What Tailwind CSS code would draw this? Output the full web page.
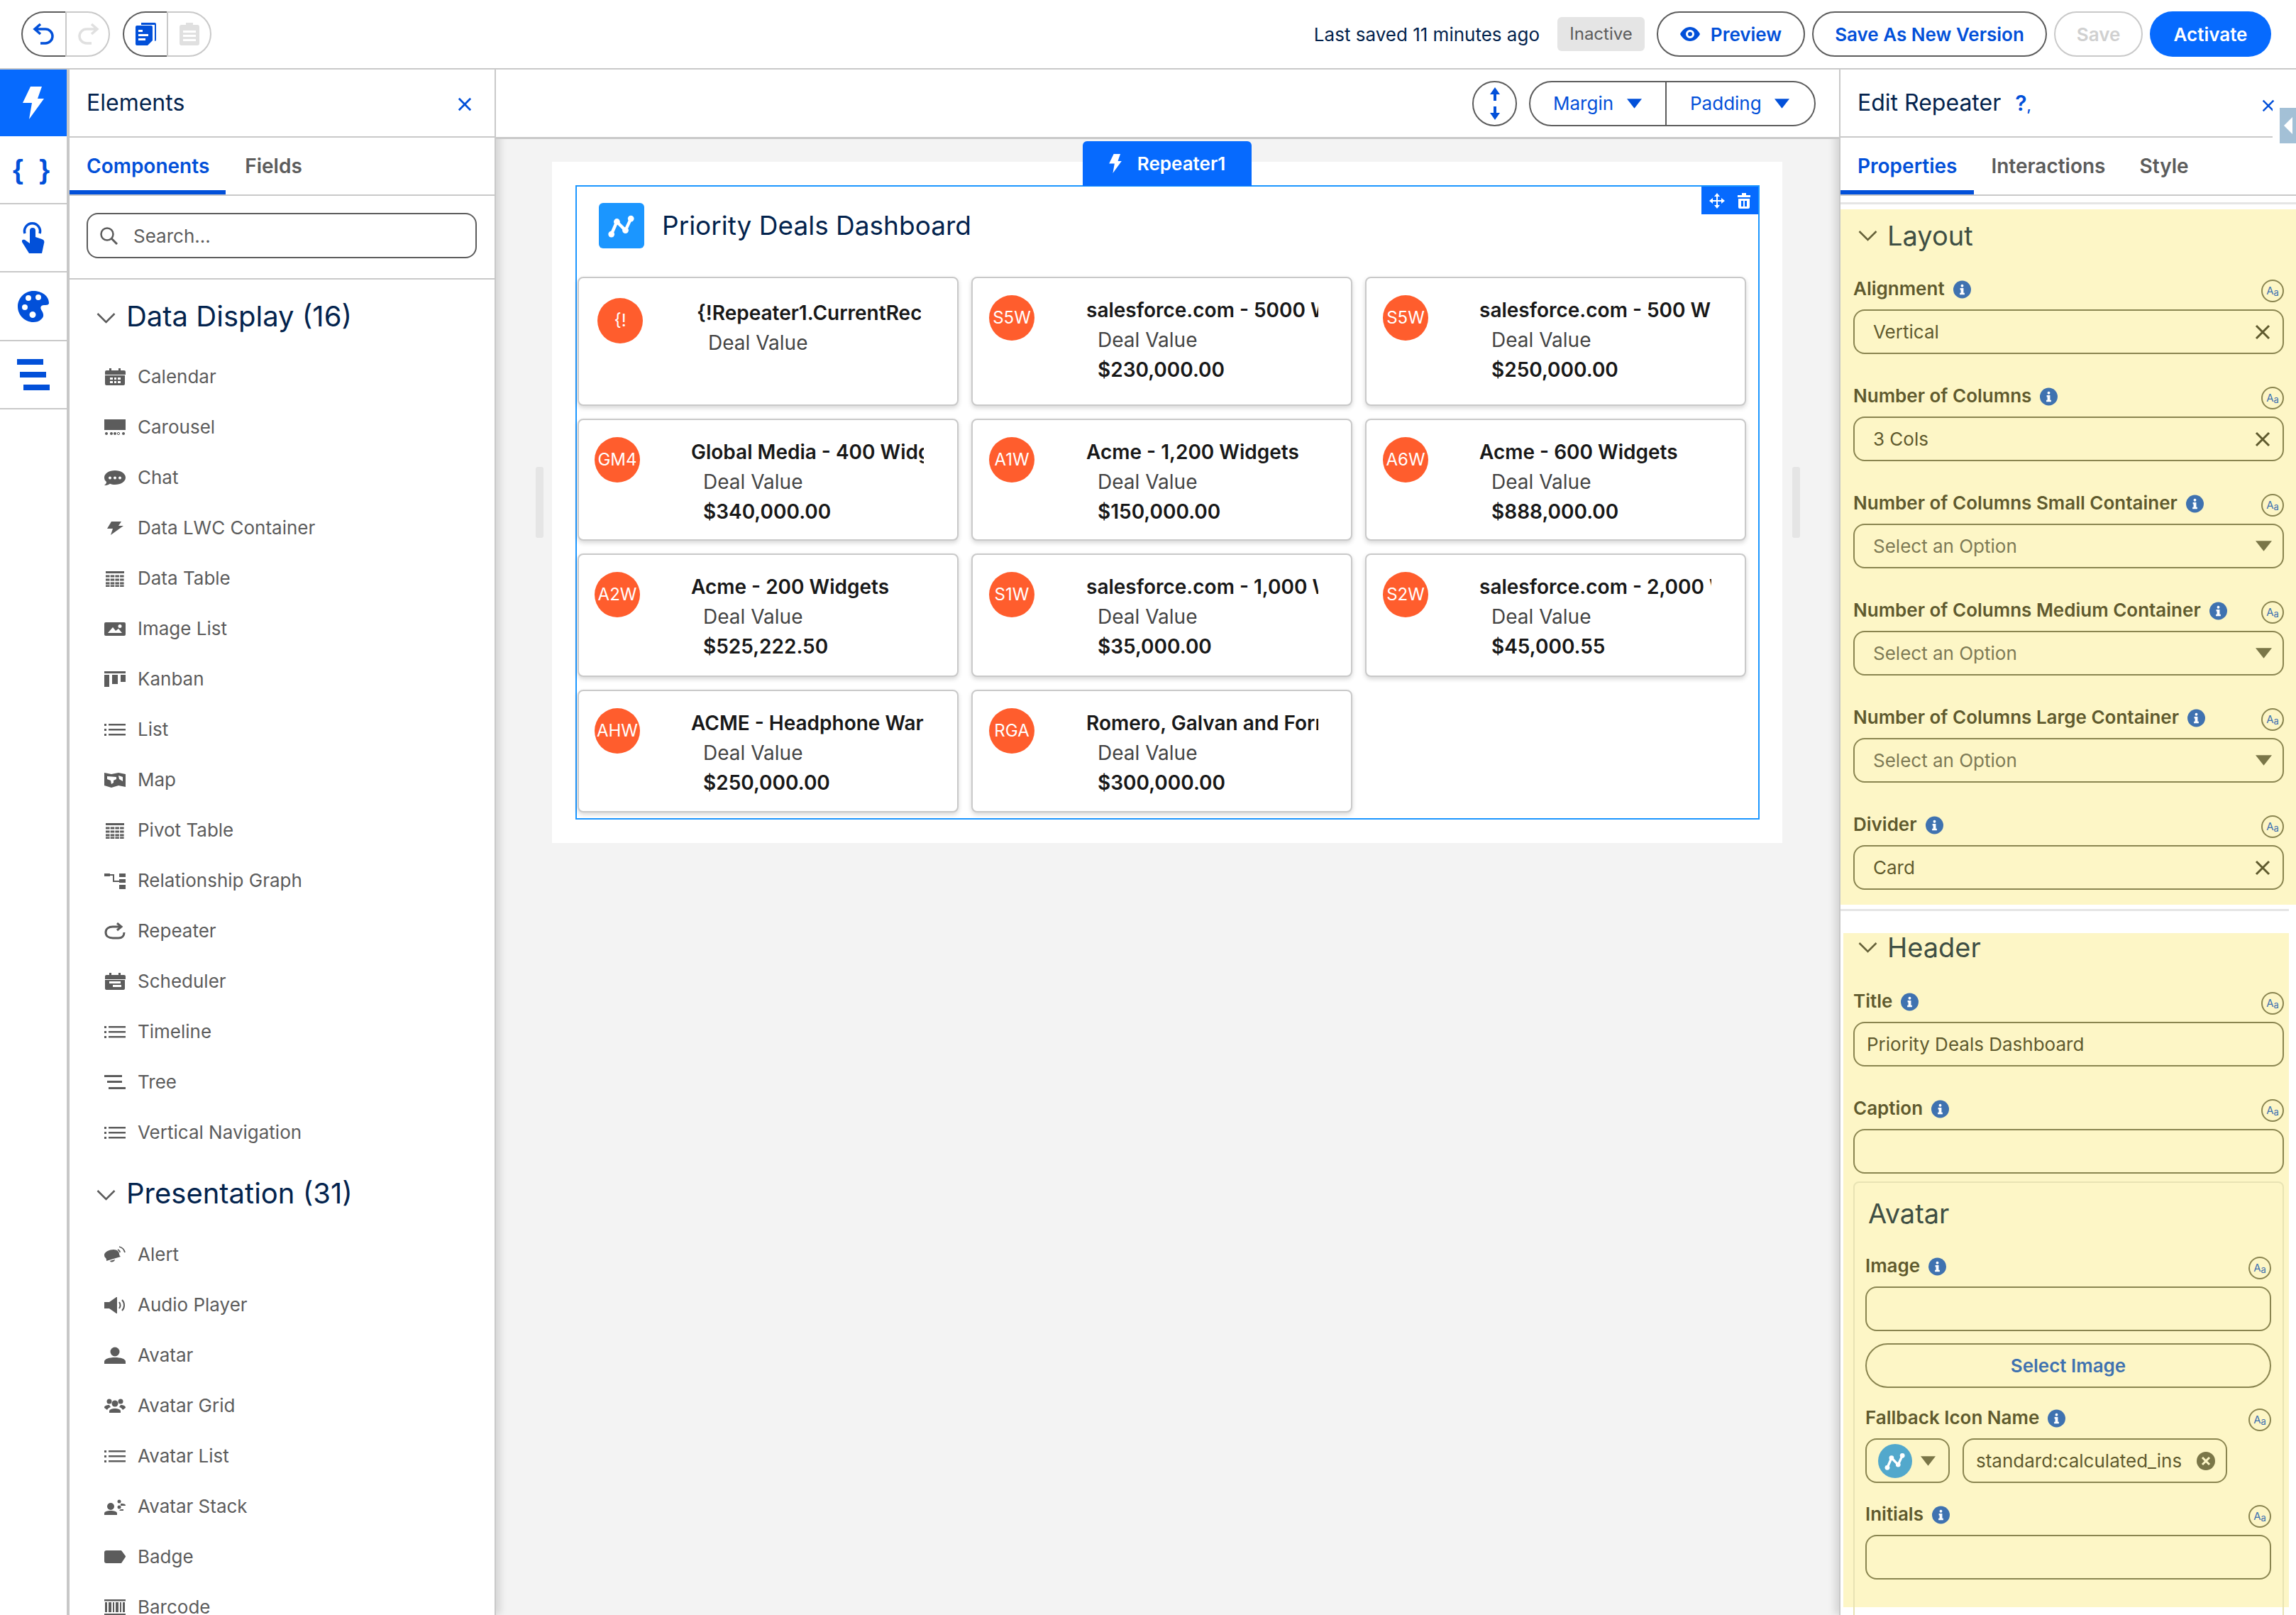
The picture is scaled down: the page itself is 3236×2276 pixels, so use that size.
<!DOCTYPE html>
<html lang="en">
<head>
    <meta charset="UTF-8">
    <title>Lightning App Builder - Priority Deals Dashboard</title>
    <script src="https://cdn.jsdelivr.net/npm/@tailwindcss/browser@4"></script>
</head>
<body class="bg-white font-[Inter,sans-serif] text-[26px] text-[#5c5c5c]">

<!-- Icon sprites -->
<svg class="absolute w-0 h-0" xmlns="http://www.w3.org/2000/svg">
    <defs>
        <symbol id="i-bolt" viewBox="0 0 30 46"><path fill="currentColor" d="M11 0h16l-6 17h9L9 46l4-23H0z"/></symbol>
        <symbol id="i-calendar" viewBox="0 0 30 24"><path fill="currentColor" d="M7 0h3v3h10V0h3v3h5a2 2 0 0 1 2 2v4H1V5a2 2 0 0 1 2-2h4z"/><path fill="currentColor" fill-rule="evenodd" d="M1 10h28v12a2 2 0 0 1-2 2H3a2 2 0 0 1-2-2zM8 13v3h4v-3zM14 13v3h3v-3zM19 13v3h4v-3zM8 18v3h4v-3zM14 18v3h3v-3zM19 18v3h4v-3z"/></symbol>
        <symbol id="i-carousel" viewBox="0 0 30 24"><rect fill="currentColor" y="1" width="30" height="15"/><circle fill="currentColor" cx="3" cy="21" r="2"/><circle fill="currentColor" cx="10" cy="21" r="2"/><circle fill="currentColor" cx="15" cy="21" r="2"/><circle fill="none" stroke="currentColor" cx="20" cy="21" r="1.6"/><circle fill="currentColor" cx="27" cy="21" r="2"/></symbol>
        <symbol id="i-chat" viewBox="0 0 30 24"><path fill="currentColor" fill-rule="evenodd" d="M15 2c8 0 15 4 15 10s-7 10-15 10c-3 0-5-.4-7-1.200C5 23 2 23 0 23c2-1.500 3-3 3-5-2-1.500-3-3.500-3-6C0 6 7 2 15 2zM8 10.500a2 2 0 1 0 0 4 2 2 0 0 0 0-4zM15 10.500a2 2 0 1 0 0 4 2 2 0 0 0 0-4zM22 10.500a2 2 0 1 0 0 4 2 2 0 0 0 0-4z"/></symbol>
        <symbol id="i-smallbolt" viewBox="0 0 30 24"><path fill="currentColor" d="M10 3h14l-4 6h7L9 22l3-9H4z"/></symbol>
        <symbol id="i-table" viewBox="0 0 30 24"><path fill="currentColor" d="M2 2h26v3H2z"/><path stroke="currentColor" stroke-width="3" stroke-dasharray="5.500 1.200" d="M2 9h26M2 14h26M2 19h26M2 23h26"/></symbol>
        <symbol id="i-image" viewBox="0 0 30 24"><path fill="currentColor" fill-rule="evenodd" d="M2 3h26a2 2 0 0 1 2 2v15a2 2 0 0 1-2 2H2a2 2 0 0 1-2-2V5a2 2 0 0 1 2-2zM5 18h20l-5-6-4 3-4-5zM22 6a2.500 2.500 0 1 0 0 5 2.500 2.500 0 0 0 0-5z"/></symbol>
        <symbol id="i-kanban" viewBox="0 0 30 24"><path fill="currentColor" d="M0 1h30v3H0zM0 6h7v17H0zM11 6h8v13h-8zM23 6h7v10h-7z"/></symbol>
        <symbol id="i-list" viewBox="0 0 30 24"><path fill="currentColor" d="M0 4h3v3H0zM0 11h3v3H0zM0 18h3v3H0zM6 4h24v2.500H6zM6 11h24v2.500H6zM6 18h24v2.500H6z"/></symbol>
        <symbol id="i-map" viewBox="0 0 30 24"><path fill="currentColor" fill-rule="evenodd" d="M0 2l10 2 10-2 10 2v18l-10-2-10 3-10-3zM4 7v4l5 2 1 5 3-2v-3l4-2 0-3zM20 6l1 5 5 3V8z"/></symbol>
        <symbol id="i-graph" viewBox="0 0 30 24"><path fill="currentColor" d="M0 2h8v4H0zM21 2h9v5h-9zM21 10h9v5h-9zM21 18h9v6h-9zM8 3h6v9h7v2h-9V5H8z"/></symbol>
        <symbol id="i-repeat" viewBox="0 0 30 24"><path fill="none" stroke="currentColor" stroke-width="3" d="M23 6H12C6 6 2 9 2 14s4 8 10 8h8c5 0 8-3 8-8"/><path fill="none" stroke="currentColor" stroke-width="3" d="M18 1l6 5-6 5"/></symbol>
        <symbol id="i-sched" viewBox="0 0 30 24"><path fill="currentColor" d="M7 0h3v3h10V0h3v3h5a2 2 0 0 1 2 2v4H1V5a2 2 0 0 1 2-2h4z"/><path fill="currentColor" fill-rule="evenodd" d="M1 10h28v12a2 2 0 0 1-2 2H3a2 2 0 0 1-2-2zM7 12v3h16v-3zM12 17v3h12v-3z"/></symbol>
        <symbol id="i-tree" viewBox="0 0 30 24"><path fill="currentColor" d="M0 2h25v3H0zM4 10h21v3H4zM6 19h24v3H6z"/></symbol>
        <symbol id="i-alert" viewBox="0 0 30 24"><path fill="currentColor" d="M13 5c5 0 8 3 8 6 0 2 1 3 2 4L3 21c0-2 0-3-1-4-2-2-2-3-2-5 1-4 7-7 13-7zM8 21l7-2c0 3-6 5-7 2z"/><path fill="none" stroke="currentColor" stroke-width="1.800" d="M19 5c2 1 3 3 3 4M21 1c4 1 7 4 8 8"/></symbol>
        <symbol id="i-audio" viewBox="0 0 30 24"><path fill="currentColor" d="M0 8h7l10-7h1v23h-1L7 17H0z"/><path fill="none" stroke="currentColor" stroke-width="2" d="M21 8c2 3 2 6 0 9M25 5c4 4 4 11 0 15"/></symbol>
        <symbol id="i-avatar" viewBox="0 0 30 24"><circle fill="currentColor" cx="15" cy="7" r="6.500"/><path fill="currentColor" d="M0 24v-3c0-4 7-6 15-6s15 2 15 6v3z"/></symbol>
        <symbol id="i-agrid" viewBox="0 0 30 24"><circle fill="currentColor" cx="15" cy="9" r="4.500"/><path fill="currentColor" d="M7 22v-2c0-3 4-4 8-4s8 1 8 4v2z"/><circle fill="currentColor" cx="7" cy="6" r="3.500"/><circle fill="currentColor" cx="23" cy="6" r="3.500"/><path fill="currentColor" d="M0 15c0-3 3-4 7-4l2 3c-3 1-4 2-5 4zM30 15c0-3-3-4-7-4l-2 3c3 1 4 2 5 4z"/></symbol>
        <symbol id="i-astack" viewBox="0 0 30 24"><circle fill="currentColor" cx="9" cy="12" r="5"/><path fill="currentColor" d="M0 24v-2c0-3 4-4 9-4s9 1 9 4v2z"/><circle fill="currentColor" cx="21" cy="5" r="2.500"/><circle fill="currentColor" cx="21" cy="13" r="2.500"/><path fill="currentColor" d="M23 8c4 0 7 0 7 3h-7zM23 16h4v2h-6z"/></symbol>
        <symbol id="i-badge" viewBox="0 0 30 24"><path fill="currentColor" d="M3 3h21l6 8v1l-6 9H3a3 3 0 0 1-3-3V6a3 3 0 0 1 3-3z"/></symbol>
        <symbol id="i-barcode" viewBox="0 0 30 24"><path fill="currentColor" d="M0 1h30v2.500H0zM0 21h30v2.500H0zM1 5h3v14H1zM6 5h4v14H6zM12 5h2v14h-2zM16 5h4v14h-4zM22 5h2v14h-2zM26 5h3v14h-3z"/></symbol>
        <symbol id="i-chevron" viewBox="0 0 27 16"><path fill="none" stroke="currentColor" stroke-width="2.500" d="M1.500 2l12 12 12-12"/></symbol>
        <symbol id="i-x" viewBox="0 0 22 22"><path fill="none" stroke="currentColor" stroke-width="3" d="M2 2l18 18M20 2L2 20"/></symbol>
        <symbol id="i-caret" viewBox="0 0 22 16"><path fill="currentColor" d="M0 1h22L11 15z"/></symbol>
        <symbol id="i-insight" viewBox="0 0 40 40"><path fill="none" stroke="currentColor" stroke-width="4" stroke-linejoin="round" d="M7 31l7-16 11 11 7-15"/><circle fill="currentColor" cx="7" cy="31" r="4"/><circle fill="currentColor" cx="14" cy="15" r="4"/><circle fill="currentColor" cx="25" cy="26" r="4"/><circle fill="currentColor" cx="32" cy="11" r="4"/></symbol>
        <symbol id="i-info" viewBox="0 0 26 26"><circle fill="#3f72b0" cx="13" cy="13" r="13"/><circle fill="#fff" cx="13" cy="7.500" r="2"/><path fill="#fff" d="M10 11h5v7h1.500v2.500h-7V18H11v-4.500h-1z"/></symbol>
    </defs>
</svg>

<div class="flex flex-col w-[3236px] h-[2276px] overflow-hidden">

    <!-- Top bar -->
    <header class="relative z-30 flex items-center justify-between h-[98px] shrink-0 pl-[30px] pr-[35px] bg-white border-b-2 border-[#c9c9c9]">
        <div class="flex items-center gap-[18px]">
            <div class="flex h-[64px]">
                <div class="flex items-center justify-center w-[62px] rounded-l-full border-2 border-r-0 border-[#5c5c5c] text-[#0250d9]">
                    <svg class="w-[32px] h-[32px]" viewBox="0 0 32 32"><path fill="none" stroke="currentColor" stroke-width="3.500" d="M11 2L3 9l8 7M3 9h15a9.500 9.500 0 0 1 0 20h-7"/></svg>
                </div>
                <div class="flex items-center justify-center w-[63px] rounded-r-full border-2 border-[#c9c9c9] text-[#e0e0e0]">
                    <svg class="w-[32px] h-[32px]" viewBox="0 0 32 32"><path fill="none" stroke="currentColor" stroke-width="3.500" d="M21 2l8 7-8 7M29 9H14a9.500 9.500 0 0 0 0 20h7"/></svg>
                </div>
            </div>
            <div class="flex h-[64px]">
                <div class="flex items-center justify-center w-[62px] rounded-l-full border-2 border-r-0 border-[#5c5c5c] text-[#0250d9]">
                    <svg class="w-[30px] h-[32px]" viewBox="0 0 30 32"><path fill="currentColor" d="M9 0h19a2 2 0 0 1 2 2v22a2 2 0 0 1-2 2V3H9z"/><path fill="currentColor" fill-rule="evenodd" d="M3 4h20a2 2 0 0 1 2 2v19l-7 7H3a2 2 0 0 1-2-2V6a2 2 0 0 1 2-2zM5 10v3h6v-3zM5 16v3h14v-3zM5 22v3h10v-3z"/></svg>
                </div>
                <div class="flex items-center justify-center w-[63px] rounded-r-full border-2 border-[#c9c9c9] text-[#e0e0e0]">
                    <svg class="w-[28px] h-[32px]" viewBox="0 0 28 32"><path fill="currentColor" fill-rule="evenodd" d="M9 0h10v3h6a3 3 0 0 1 3 3v23a3 3 0 0 1-3 3H3a3 3 0 0 1-3-3V6a3 3 0 0 1 3-3h6zM5 11v3h18v-3zM5 17v3h18v-3zM5 23v3h18v-3z"/></svg>
                </div>
            </div>
        </div>
        <div class="flex items-center gap-[10px]">
            <span class="mr-[15px] text-[#03234d]">Last saved 11 minutes ago</span>
            <span class="flex items-center justify-center w-[123px] h-[48px] mr-[7px] rounded-[6px] bg-[#e5e5e5] text-[24px]">Inactive</span>
            <button class="flex items-center justify-center gap-[15px] w-[209px] h-[64px] rounded-full border-2 border-[#5c5c5c] font-semibold text-[#0250d9]">
                <svg class="w-[28px] h-[20px]" viewBox="0 0 28 20"><path fill="currentColor" fill-rule="evenodd" d="M14 0c6 0 11 4 14 10-3 6-8 10-14 10S3 16 0 10C3 4 8 0 14 0zm0 4a6 6 0 1 0 0 12 6 6 0 0 0 0-12zm0 3a3 3 0 1 1 0 6 3 3 0 0 1 0-6z"/></svg>
                Preview
            </button>
            <button class="w-[331px] h-[64px] rounded-full border-2 border-[#5c5c5c] font-semibold text-[#0250d9]">Save As New Version</button>
            <button class="w-[125px] h-[64px] rounded-full border-2 border-[#c9c9c9] font-semibold text-[#d0d0d0]">Save</button>
            <button class="w-[171px] h-[64px] rounded-full bg-[#066afe] font-semibold text-white">Activate</button>
        </div>
    </header>

    <div class="flex flex-1 min-h-0">

        <!-- Icon rail -->
        <nav class="flex flex-col w-[98px] shrink-0 border-r-4 border-[#c9c9c9] bg-white text-[#0250d9]">
            <div class="flex items-center justify-center h-[94px] bg-[#066afe] text-white">
                <svg class="w-[32px] h-[46px]"><use href="#i-bolt"/></svg>
            </div>
            <div class="flex items-center justify-center h-[96px] border-b-2 border-[#c9c9c9] font-[Liberation_Sans,sans-serif] font-bold text-[38px] tracking-[6px]">{ }</div>
            <div class="flex items-center justify-center h-[96px] border-b-2 border-[#c9c9c9]">
                <svg class="w-[32px] h-[46px]" viewBox="0 0 32 46"><path fill="none" stroke="currentColor" stroke-width="3.500" d="M4 17a11 11 0 1 1 21 0"/><path fill="currentColor" d="M11 13a4 4 0 0 1 8 0v9l9 3c3 1 4 3 3 6l-3 14H10L0 29c-1-3 2-4 4-3l7 5z"/></svg>
            </div>
            <div class="flex items-center justify-center h-[97px] border-b-2 border-[#c9c9c9]">
                <svg class="w-[44px] h-[44px]" viewBox="0 0 44 44"><path fill="currentColor" fill-rule="evenodd" d="M22 0c12 0 22 7 22 17 0 3-4 3-7 3-5 0-6 4-3 8 3 5 3 9-1 12-3 3-7 4-11 4C10 44 0 34 0 22S10 0 22 0zM15 6a4 4 0 1 0 0 8 4 4 0 0 0 0-8zM29 5a4 4 0 1 0 0 8 4 4 0 0 0 0-8zM10 19a4 4 0 1 0 0 8 4 4 0 0 0 0-8zM21 29a4.500 4.500 0 1 0 0 9 4.500 4.500 0 0 0 0-9z"/></svg>
            </div>
            <div class="flex items-center justify-center h-[96px] border-b-2 border-[#c9c9c9]">
                <svg class="w-[46px] h-[46px]" viewBox="0 0 46 46"><path fill="currentColor" d="M0 1h37v8H0zM4 19h37v8H4zM9 37h37v8H9z"/></svg>
            </div>
        </nav>

        <!-- Elements panel -->
        <aside class="relative z-10 flex flex-col w-[601px] shrink-0 overflow-hidden bg-white border-r-2 border-[#c9c9c9] shadow-[6px_0_10px_rgba(0,0,0,0.12)]">
            <div class="flex items-center justify-between h-[96px] shrink-0 pl-[24px] pr-[32px] border-b-2 border-[#c9c9c9]">
                <span class="text-[32px] text-[#03234d]">Elements</span>
                <svg class="w-[20px] h-[20px] mt-[4px] text-[#0250d9]"><use href="#i-x"/></svg>
            </div>
            <div class="relative flex items-center gap-[50px] h-[82px] shrink-0 pl-[24px] border-b-2 border-[#c9c9c9] text-[28px] font-semibold">
                <span class="text-[#0250d9]">Components</span>
                <span>Fields</span>
                <span class="absolute left-0 bottom-0 w-[220px] h-[6px] bg-[#0250d9]"></span>
            </div>
            <div class="h-[118px] shrink-0 pt-[24px] px-[24px] border-b-2 border-[#c9c9c9]">
                <div class="flex items-center gap-[22px] w-[550px] h-[64px] pl-[16px] rounded-[16px] border-2 border-[#5c5c5c]">
                    <svg class="w-[26px] h-[26px]" viewBox="0 0 26 26"><circle cx="11" cy="11" r="8.500" fill="none" stroke="currentColor" stroke-width="2.500"/><path stroke="currentColor" stroke-width="3" d="M17 17l8 8"/></svg>
                    <span>Search...</span>
                </div>
            </div>
            <div class="flex items-center gap-[15px] h-[101px] shrink-0 pl-[38px] pt-[3px]">
                <svg class="w-[27px] h-[16px] mt-[4px]"><use href="#i-chevron"/></svg>
                <span class="text-[40px] text-[#03234d]">Data Display (16)</span>
            </div>
            <ul class="shrink-0">
                <li class="flex items-center gap-[17px] h-[71px] pl-[49px]"><svg class="w-[30px] h-[24px]"><use href="#i-calendar"/></svg>Calendar</li>
                <li class="flex items-center gap-[17px] h-[71px] pl-[49px]"><svg class="w-[30px] h-[24px]"><use href="#i-carousel"/></svg>Carousel</li>
                <li class="flex items-center gap-[17px] h-[71px] pl-[49px]"><svg class="w-[30px] h-[24px]"><use href="#i-chat"/></svg>Chat</li>
                <li class="flex items-center gap-[17px] h-[71px] pl-[49px]"><svg class="w-[30px] h-[24px]"><use href="#i-smallbolt"/></svg>Data LWC Container</li>
                <li class="flex items-center gap-[17px] h-[71px] pl-[49px]"><svg class="w-[30px] h-[24px]"><use href="#i-table"/></svg>Data Table</li>
                <li class="flex items-center gap-[17px] h-[71px] pl-[49px]"><svg class="w-[30px] h-[24px]"><use href="#i-image"/></svg>Image List</li>
                <li class="flex items-center gap-[17px] h-[71px] pl-[49px]"><svg class="w-[30px] h-[24px]"><use href="#i-kanban"/></svg>Kanban</li>
                <li class="flex items-center gap-[17px] h-[71px] pl-[49px]"><svg class="w-[30px] h-[24px]"><use href="#i-list"/></svg>List</li>
                <li class="flex items-center gap-[17px] h-[71px] pl-[49px]"><svg class="w-[30px] h-[24px]"><use href="#i-map"/></svg>Map</li>
                <li class="flex items-center gap-[17px] h-[71px] pl-[49px]"><svg class="w-[30px] h-[24px]"><use href="#i-table"/></svg>Pivot Table</li>
                <li class="flex items-center gap-[17px] h-[71px] pl-[49px]"><svg class="w-[30px] h-[24px]"><use href="#i-graph"/></svg>Relationship Graph</li>
                <li class="flex items-center gap-[17px] h-[71px] pl-[49px]"><svg class="w-[30px] h-[24px]"><use href="#i-repeat"/></svg>Repeater</li>
                <li class="flex items-center gap-[17px] h-[71px] pl-[49px]"><svg class="w-[30px] h-[24px]"><use href="#i-sched"/></svg>Scheduler</li>
                <li class="flex items-center gap-[17px] h-[71px] pl-[49px]"><svg class="w-[30px] h-[24px]"><use href="#i-list"/></svg>Timeline</li>
                <li class="flex items-center gap-[17px] h-[71px] pl-[49px]"><svg class="w-[30px] h-[24px]"><use href="#i-tree"/></svg>Tree</li>
                <li class="flex items-center gap-[17px] h-[71px] pl-[49px]"><svg class="w-[30px] h-[24px]"><use href="#i-list"/></svg>Vertical Navigation</li>
            </ul>
            <div class="flex items-center gap-[15px] h-[101px] shrink-0 pl-[38px]">
                <svg class="w-[27px] h-[16px] mt-[4px]"><use href="#i-chevron"/></svg>
                <span class="text-[40px] text-[#03234d]">Presentation (31)</span>
            </div>
            <ul class="shrink-0">
                <li class="flex items-center gap-[17px] h-[71px] pl-[49px]"><svg class="w-[30px] h-[24px]"><use href="#i-alert"/></svg>Alert</li>
                <li class="flex items-center gap-[17px] h-[71px] pl-[49px]"><svg class="w-[30px] h-[24px]"><use href="#i-audio"/></svg>Audio Player</li>
                <li class="flex items-center gap-[17px] h-[71px] pl-[49px]"><svg class="w-[30px] h-[24px]"><use href="#i-avatar"/></svg>Avatar</li>
                <li class="flex items-center gap-[17px] h-[71px] pl-[49px]"><svg class="w-[30px] h-[24px]"><use href="#i-agrid"/></svg>Avatar Grid</li>
                <li class="flex items-center gap-[17px] h-[71px] pl-[49px]"><svg class="w-[30px] h-[24px]"><use href="#i-list"/></svg>Avatar List</li>
                <li class="flex items-center gap-[17px] h-[71px] pl-[49px]"><svg class="w-[30px] h-[24px]"><use href="#i-astack"/></svg>Avatar Stack</li>
                <li class="flex items-center gap-[17px] h-[71px] pl-[49px]"><svg class="w-[30px] h-[24px]"><use href="#i-badge"/></svg>Badge</li>
                <li class="flex items-center gap-[17px] h-[71px] pl-[49px]"><svg class="w-[30px] h-[24px]"><use href="#i-barcode"/></svg>Barcode</li>
            </ul>
        </aside>

        <!-- Canvas -->
        <main class="flex flex-col flex-1 min-w-0 bg-[#f3f3f3]">
            <div class="relative z-20 flex items-center justify-end h-[98px] shrink-0 pr-[33px] bg-white border-b-3 border-[#c9c9c9]">
                <div class="flex items-center justify-center w-[63px] h-[64px] mr-[17px] rounded-full border-2 border-[#5c5c5c] text-[#0250d9]">
                    <svg class="w-[18px] h-[46px]" viewBox="0 0 18 46"><path fill="currentColor" d="M9 0l7 10h-5v9H7v-9H2zM9 46l7-10h-5v-9H7v9H2z"/></svg>
                </div>
                <div class="flex h-[64px] rounded-full border-2 border-[#5c5c5c] text-[#0250d9]">
                    <div class="flex items-center gap-[19px] w-[192px] pl-[32px] border-r-2 border-[#5c5c5c]">Margin<svg class="w-[21px] h-[16px]"><use href="#i-caret"/></svg></div>
                    <div class="flex items-center gap-[18px] w-[208px] pl-[33px]">Padding<svg class="w-[21px] h-[16px]"><use href="#i-caret"/></svg></div>
                </div>
            </div>
            <div class="relative flex-1 min-h-0">
                <div class="absolute left-[56px] top-[462px] w-[11px] h-[100px] rounded-[3px] bg-[#e5e5e5]"></div>
                <div class="absolute left-[1827px] top-[462px] w-[11px] h-[100px] rounded-[3px] bg-[#e5e5e5]"></div>
                <div class="w-[1734px] h-[960px] mt-[32px] ml-[79px] pt-[33px] pl-[33px] bg-white">
                    <!-- Repeater frame -->
                    <div class="relative w-[1669px] h-[894px] border-2 border-[#1b96ff]">
                        <div class="absolute left-[713px] -top-[64px] flex items-center justify-center gap-[22px] w-[238px] h-[63px] rounded-t-[6px] bg-[#066afe] font-semibold text-white">
                            <svg class="w-[18px] h-[27px]"><use href="#i-bolt"/></svg>Repeater1
                        </div>
                        <div class="absolute right-0 top-0 flex items-center justify-center gap-[18px] w-[80px] h-[39px] bg-[#066afe] text-white">
                            <svg class="w-[22px] h-[22px]" viewBox="0 0 22 22"><path fill="currentColor" d="M11 0l4 5h-3v5h5V7l5 4-5 4v-3h-5v5h3l-4 5-4-5h3v-5H5v3l-5-4 5-4v3h5V5H7z"/></svg>
                            <svg class="w-[18px] h-[22px]" viewBox="0 0 18 22"><path fill="currentColor" fill-rule="evenodd" d="M6 0h6v3h6v3H0V3h6zM1 8h16v12a2 2 0 0 1-2 2H3a2 2 0 0 1-2-2zM5 11v8h3v-8zM10 11v8h3v-8z"/></svg>
                        </div>
                        <div class="flex items-start gap-[25px] h-[127px] pt-[23px] pl-[31px]">
                            <div class="flex items-center justify-center w-[64px] h-[64px] rounded-[6px] bg-[#1b96ff] text-white">
                                <svg class="w-[44px] h-[44px]"><use href="#i-insight"/></svg>
                            </div>
                            <h1 class="h-[64px] leading-[64px] text-[37px] text-[#03234d]">Priority Deals Dashboard</h1>
                        </div>
                        <div class="grid grid-cols-[537px_537px_537px] grid-rows-[182px_172px_174px_173px] gap-[18px] pl-[1px]">

                            <div class="flex items-start pt-[28px] pl-[26px] rounded-[8px] border-2 border-[#c9c9c9] bg-white shadow-[0_3px_6px_rgba(0,0,0,0.16)]">
                                <div class="flex items-center justify-center w-[64px] h-[64px] shrink-0 rounded-full bg-[#ff5d2d] text-[24px] text-white">{!</div>
                                <div class="w-[316px] ml-[76px] text-[28px] leading-[42px] overflow-hidden whitespace-nowrap">
                                    <div class="font-semibold text-[#181818]">{!Repeater1.CurrentRecord.Name}</div>
                                    <div class="pl-[16px] text-[#444444]">Deal Value</div>
                                </div>
                            </div>
                            <div class="flex items-start pt-[24px] pl-[23px] rounded-[8px] border-2 border-[#c9c9c9] bg-white shadow-[0_3px_6px_rgba(0,0,0,0.16)]">
                                <div class="flex items-center justify-center w-[64px] h-[64px] shrink-0 rounded-full bg-[#ff5d2d] text-[24px] text-white">S5W</div>
                                <div class="w-[327px] ml-[73px] text-[28px] leading-[42px] overflow-hidden whitespace-nowrap">
                                    <div class="font-semibold text-[#181818]">salesforce.com - 5000 Widgets</div>
                                    <div class="pl-[16px] text-[#444444]">Deal Value</div>
                                    <div class="pl-[16px] font-semibold text-[#181818]">$230,000.00</div>
                                </div>
                            </div>
                            <div class="flex items-start pt-[24px] pl-[23px] rounded-[8px] border-2 border-[#c9c9c9] bg-white shadow-[0_3px_6px_rgba(0,0,0,0.16)]">
                                <div class="flex items-center justify-center w-[64px] h-[64px] shrink-0 rounded-full bg-[#ff5d2d] text-[24px] text-white">S5W</div>
                                <div class="w-[327px] ml-[72px] text-[28px] leading-[42px] overflow-hidden whitespace-nowrap">
                                    <div class="font-semibold text-[#181818]">salesforce.com - 500 Widgets</div>
                                    <div class="pl-[17px] text-[#444444]">Deal Value</div>
                                    <div class="pl-[17px] font-semibold text-[#181818]">$250,000.00</div>
                                </div>
                            </div>

                            <div class="flex items-start pt-[24px] pl-[22px] rounded-[8px] border-2 border-[#c9c9c9] bg-white shadow-[0_3px_6px_rgba(0,0,0,0.16)]">
                                <div class="flex items-center justify-center w-[64px] h-[64px] shrink-0 rounded-full bg-[#ff5d2d] text-[24px] text-white">GM4</div>
                                <div class="w-[328px] ml-[72px] text-[28px] leading-[42px] overflow-hidden whitespace-nowrap">
                                    <div class="font-semibold text-[#181818]">Global Media - 400 Widgets</div>
                                    <div class="pl-[17px] text-[#444444]">Deal Value</div>
                                    <div class="pl-[17px] font-semibold text-[#181818]">$340,000.00</div>
                                </div>
                            </div>
                            <div class="flex items-start pt-[24px] pl-[23px] rounded-[8px] border-2 border-[#c9c9c9] bg-white shadow-[0_3px_6px_rgba(0,0,0,0.16)]">
                                <div class="flex items-center justify-center w-[64px] h-[64px] shrink-0 rounded-full bg-[#ff5d2d] text-[24px] text-white">A1W</div>
                                <div class="w-[327px] ml-[73px] text-[28px] leading-[42px] overflow-hidden whitespace-nowrap">
                                    <div class="font-semibold text-[#181818]">Acme - 1,200 Widgets</div>
                                    <div class="pl-[16px] text-[#444444]">Deal Value</div>
                                    <div class="pl-[16px] font-semibold text-[#181818]">$150,000.00</div>
                                </div>
                            </div>
                            <div class="flex items-start pt-[24px] pl-[23px] rounded-[8px] border-2 border-[#c9c9c9] bg-white shadow-[0_3px_6px_rgba(0,0,0,0.16)]">
                                <div class="flex items-center justify-center w-[64px] h-[64px] shrink-0 rounded-full bg-[#ff5d2d] text-[24px] text-white">A6W</div>
                                <div class="w-[327px] ml-[72px] text-[28px] leading-[42px] overflow-hidden whitespace-nowrap">
                                    <div class="font-semibold text-[#181818]">Acme - 600 Widgets</div>
                                    <div class="pl-[17px] text-[#444444]">Deal Value</div>
                                    <div class="pl-[17px] font-semibold text-[#181818]">$888,000.00</div>
                                </div>
                            </div>

                            <div class="flex items-start pt-[24px] pl-[22px] rounded-[8px] border-2 border-[#c9c9c9] bg-white shadow-[0_3px_6px_rgba(0,0,0,0.16)]">
                                <div class="flex items-center justify-center w-[64px] h-[64px] shrink-0 rounded-full bg-[#ff5d2d] text-[24px] text-white">A2W</div>
                                <div class="w-[328px] ml-[72px] text-[28px] leading-[42px] overflow-hidden whitespace-nowrap">
                                    <div class="font-semibold text-[#181818]">Acme - 200 Widgets</div>
                                    <div class="pl-[17px] text-[#444444]">Deal Value</div>
                                    <div class="pl-[17px] font-semibold text-[#181818]">$525,222.50</div>
                                </div>
                            </div>
                            <div class="flex items-start pt-[24px] pl-[23px] rounded-[8px] border-2 border-[#c9c9c9] bg-white shadow-[0_3px_6px_rgba(0,0,0,0.16)]">
                                <div class="flex items-center justify-center w-[64px] h-[64px] shrink-0 rounded-full bg-[#ff5d2d] text-[24px] text-white">S1W</div>
                                <div class="w-[327px] ml-[73px] text-[28px] leading-[42px] overflow-hidden whitespace-nowrap">
                                    <div class="font-semibold text-[#181818]">salesforce.com - 1,000 Widgets</div>
                                    <div class="pl-[16px] text-[#444444]">Deal Value</div>
                                    <div class="pl-[16px] font-semibold text-[#181818]">$35,000.00</div>
                                </div>
                            </div>
                            <div class="flex items-start pt-[24px] pl-[23px] rounded-[8px] border-2 border-[#c9c9c9] bg-white shadow-[0_3px_6px_rgba(0,0,0,0.16)]">
                                <div class="flex items-center justify-center w-[64px] h-[64px] shrink-0 rounded-full bg-[#ff5d2d] text-[24px] text-white">S2W</div>
                                <div class="w-[327px] ml-[72px] text-[28px] leading-[42px] overflow-hidden whitespace-nowrap">
                                    <div class="font-semibold text-[#181818]">salesforce.com - 2,000 Widgets</div>
                                    <div class="pl-[17px] text-[#444444]">Deal Value</div>
                                    <div class="pl-[17px] font-semibold text-[#181818]">$45,000.55</div>
                                </div>
                            </div>

                            <div class="flex items-start pt-[24px] pl-[22px] rounded-[8px] border-2 border-[#c9c9c9] bg-white shadow-[0_3px_6px_rgba(0,0,0,0.16)]">
                                <div class="flex items-center justify-center w-[64px] h-[64px] shrink-0 rounded-full bg-[#ff5d2d] text-[24px] text-white">AHW</div>
                                <div class="w-[328px] ml-[72px] text-[28px] leading-[42px] overflow-hidden whitespace-nowrap">
                                    <div class="font-semibold text-[#181818]">ACME - Headphone Warranty</div>
                                    <div class="pl-[17px] text-[#444444]">Deal Value</div>
                                    <div class="pl-[17px] font-semibold text-[#181818]">$250,000.00</div>
                                </div>
                            </div>
                            <div class="flex items-start pt-[24px] pl-[23px] rounded-[8px] border-2 border-[#c9c9c9] bg-white shadow-[0_3px_6px_rgba(0,0,0,0.16)]">
                                <div class="flex items-center justify-center w-[64px] h-[64px] shrink-0 rounded-full bg-[#ff5d2d] text-[24px] text-white">RGA</div>
                                <div class="w-[327px] ml-[73px] text-[28px] leading-[42px] overflow-hidden whitespace-nowrap">
                                    <div class="font-semibold text-[#181818]">Romero, Galvan and Fornier</div>
                                    <div class="pl-[16px] text-[#444444]">Deal Value</div>
                                    <div class="pl-[16px] font-semibold text-[#181818]">$300,000.00</div>
                                </div>
                            </div>
                        </div>
                    </div>
                </div>
            </div>
        </main>

        <!-- Properties panel -->
        <aside class="relative z-10 flex flex-col w-[644px] shrink-0 overflow-hidden bg-white border-l-2 border-[#c9c9c9] shadow-[-6px_0_10px_rgba(0,0,0,0.12)]">
            <div class="relative flex items-center gap-[20px] h-[96px] shrink-0 pl-[24px] border-b-2 border-[#c9c9c9]">
                <span class="text-[32px] text-[#03234d]">Edit Repeater</span>
                <span class="text-[30px] font-semibold text-[#0250d9]">?<span class="text-[20px]">,</span></span>
                <svg class="absolute left-[594px] top-[42px] w-[18px] h-[18px] text-[#0250d9]"><use href="#i-x"/></svg>
                <div class="absolute right-0 top-[46px] flex items-center w-[33px] h-[66px] pl-[10px] rounded-l-[10px] bg-white">
                    <div class="flex items-center justify-center w-[23px] h-[50px] bg-[#a3c0d6] text-white">
                        <svg class="w-[12px] h-[24px]" viewBox="0 0 12 24"><path fill="currentColor" d="M12 0v24L0 12z"/></svg>
                    </div>
                </div>
            </div>
            <div class="relative flex items-center gap-[48px] h-[82px] shrink-0 pl-[24px] border-b-2 border-[#c9c9c9] text-[28px] font-semibold">
                <span class="text-[#0250d9]">Properties</span>
                <span>Interactions</span>
                <span>Style</span>
                <span class="absolute left-0 bottom-0 w-[188px] h-[6px] bg-[#0250d9]"></span>
            </div>
            <div class="h-[10px] shrink-0 mt-[9px] border-t-3 border-[#e5e5e5]"></div>

            <!-- Layout section -->
            <section class="h-[980px] shrink-0 pl-[18px] bg-[#fdf6c6] text-[#5f5a2e]">
                <div class="flex items-center gap-[14px] h-[74px] pl-[7px] text-[38px] text-[#3f4f44]">
                    <svg class="w-[27px] h-[16px] text-[#66623a]"><use href="#i-chevron"/></svg>Layout
                </div>

                <div class="w-[607px] mb-[21px]">
                    <div class="flex items-end h-[67px] pb-[10px]">
                        <span class="font-semibold">Alignment</span>
                        <svg class="w-[25px] h-[26px] ml-[12px] mb-[5px]"><use href="#i-info"/></svg>
                        <span class="flex items-center justify-center w-[32px] h-[32px] ml-auto rounded-full border-2 border-[#8a8550] text-[15px] text-[#3f72b0]">A<span class="text-[13px] mt-[6px]">a</span></span>
                    </div>
                    <div class="flex items-center justify-between h-[63px] px-[26px] pr-[17px] rounded-[16px] border-2 border-[#8a8550]">Vertical<svg class="w-[22px] h-[22px]"><use href="#i-x"/></svg></div>
                </div>
                <div class="w-[607px] mb-[21px]">
                    <div class="flex items-end h-[67px] pb-[10px]">
                        <span class="font-semibold">Number of Columns</span>
                        <svg class="w-[25px] h-[26px] ml-[12px] mb-[5px]"><use href="#i-info"/></svg>
                        <span class="flex items-center justify-center w-[32px] h-[32px] ml-auto rounded-full border-2 border-[#8a8550] text-[15px] text-[#3f72b0]">A<span class="text-[13px] mt-[6px]">a</span></span>
                    </div>
                    <div class="flex items-center justify-between h-[63px] px-[26px] pr-[17px] rounded-[16px] border-2 border-[#8a8550]">3 Cols<svg class="w-[22px] h-[22px]"><use href="#i-x"/></svg></div>
                </div>
                <div class="w-[607px] mb-[21px]">
                    <div class="flex items-end h-[67px] pb-[10px]">
                        <span class="font-semibold">Number of Columns Small Container</span>
                        <svg class="w-[25px] h-[26px] ml-[12px] mb-[5px]"><use href="#i-info"/></svg>
                        <span class="flex items-center justify-center w-[32px] h-[32px] ml-auto rounded-full border-2 border-[#8a8550] text-[15px] text-[#3f72b0]">A<span class="text-[13px] mt-[6px]">a</span></span>
                    </div>
                    <div class="flex items-center justify-between h-[63px] px-[26px] pr-[15px] rounded-[16px] border-2 border-[#8a8550] text-[#7d7a55]">Select an Option<svg class="w-[23px] h-[17px] text-[#7a7648]"><use href="#i-caret"/></svg></div>
                </div>
                <div class="w-[607px] mb-[21px]">
                    <div class="flex items-end h-[67px] pb-[10px]">
                        <span class="font-semibold">Number of Columns Medium Container</span>
                        <svg class="w-[25px] h-[26px] ml-[12px] mb-[5px]"><use href="#i-info"/></svg>
                        <span class="flex items-center justify-center w-[32px] h-[32px] ml-auto rounded-full border-2 border-[#8a8550] text-[15px] text-[#3f72b0]">A<span class="text-[13px] mt-[6px]">a</span></span>
                    </div>
                    <div class="flex items-center justify-between h-[63px] px-[26px] pr-[15px] rounded-[16px] border-2 border-[#8a8550] text-[#7d7a55]">Select an Option<svg class="w-[23px] h-[17px] text-[#7a7648]"><use href="#i-caret"/></svg></div>
                </div>
                <div class="w-[607px] mb-[21px]">
                    <div class="flex items-end h-[67px] pb-[10px]">
                        <span class="font-semibold">Number of Columns Large Container</span>
                        <svg class="w-[25px] h-[26px] ml-[12px] mb-[5px]"><use href="#i-info"/></svg>
                        <span class="flex items-center justify-center w-[32px] h-[32px] ml-auto rounded-full border-2 border-[#8a8550] text-[15px] text-[#3f72b0]">A<span class="text-[13px] mt-[6px]">a</span></span>
                    </div>
                    <div class="flex items-center justify-between h-[63px] px-[26px] pr-[15px] rounded-[16px] border-2 border-[#8a8550] text-[#7d7a55]">Select an Option<svg class="w-[23px] h-[17px] text-[#7a7648]"><use href="#i-caret"/></svg></div>
                </div>
                <div class="w-[607px] mb-[21px]">
                    <div class="flex items-end h-[67px] pb-[10px]">
                        <span class="font-semibold">Divider</span>
                        <svg class="w-[25px] h-[26px] ml-[12px] mb-[5px]"><use href="#i-info"/></svg>
                        <span class="flex items-center justify-center w-[32px] h-[32px] ml-auto rounded-full border-2 border-[#8a8550] text-[15px] text-[#3f72b0]">A<span class="text-[13px] mt-[6px]">a</span></span>
                    </div>
                    <div class="flex items-center justify-between h-[63px] px-[26px] pr-[17px] rounded-[16px] border-2 border-[#8a8550]">Card<svg class="w-[22px] h-[22px]"><use href="#i-x"/></svg></div>
                </div>
            </section>
            <div class="h-[3px] shrink-0 mt-[6px] mr-[10px] bg-[#e5e5e5]"></div>

            <!-- Header section -->
            <section class="h-[950px] shrink-0 mt-[31px] ml-[4px] mr-[10px] pl-[14px] bg-[#fdf6c6] text-[#5f5a2e]">
                <div class="flex items-center gap-[14px] h-[40px] mb-[18px] pl-[7px] text-[38px] text-[#3f4f44]">
                    <svg class="w-[27px] h-[16px] text-[#66623a]"><use href="#i-chevron"/></svg>Header
                </div>
                <div class="w-[607px] mb-[21px]">
                    <div class="flex items-end h-[67px] pb-[10px]">
                        <span class="font-semibold">Title</span>
                        <svg class="w-[25px] h-[26px] ml-[12px] mb-[5px]"><use href="#i-info"/></svg>
                        <span class="flex items-center justify-center w-[32px] h-[32px] ml-auto rounded-full border-2 border-[#8a8550] text-[15px] text-[#3f72b0]">A<span class="text-[13px] mt-[6px]">a</span></span>
                    </div>
                    <div class="flex items-center h-[63px] px-[17px] rounded-[16px] border-2 border-[#8a8550]">Priority Deals Dashboard</div>
                </div>
                <div class="w-[607px] mb-[11px]">
                    <div class="flex items-end h-[67px] pb-[10px]">
                        <span class="font-semibold">Caption</span>
                        <svg class="w-[25px] h-[26px] ml-[12px] mb-[5px]"><use href="#i-info"/></svg>
                        <span class="flex items-center justify-center w-[32px] h-[32px] ml-auto rounded-full border-2 border-[#8a8550] text-[15px] text-[#3f72b0]">A<span class="text-[13px] mt-[6px]">a</span></span>
                    </div>
                    <div class="h-[63px] rounded-[16px] border-2 border-[#8a8550]"></div>
                </div>

                <!-- Avatar group -->
                <div class="w-[607px] h-[700px] pt-[23px] pl-[15px] rounded-[8px] border-2 border-[#e8e3b4]">
                    <div class="h-[40px] leading-[40px] mb-[16px] pl-[4px] text-[38px] text-[#3f4f44]">Avatar</div>
                    <div class="w-[572px]">
                        <div class="flex items-end h-[67px] pb-[10px]">
                            <span class="font-semibold">Image</span>
                            <svg class="w-[25px] h-[26px] ml-[12px] mb-[5px]"><use href="#i-info"/></svg>
                            <span class="flex items-center justify-center w-[32px] h-[32px] ml-auto rounded-full border-2 border-[#8a8550] text-[15px] text-[#3f72b0]">A<span class="text-[13px] mt-[6px]">a</span></span>
                        </div>
                        <div class="h-[63px] rounded-[16px] border-2 border-[#8a8550]"></div>
                        <button class="block w-full h-[63px] mt-[17px] mb-[4px] rounded-full border-2 border-[#8a8550] font-semibold text-[#3f72b0]">Select Image</button>

                        <div class="flex items-end h-[67px] pb-[10px]">
                            <span class="font-semibold">Fallback Icon Name</span>
                            <svg class="w-[25px] h-[26px] ml-[12px] mb-[5px]"><use href="#i-info"/></svg>
                            <span class="flex items-center justify-center w-[32px] h-[32px] ml-auto rounded-full border-2 border-[#8a8550] text-[15px] text-[#3f72b0]">A<span class="text-[13px] mt-[6px]">a</span></span>
                        </div>
                        <div class="flex gap-[18px] h-[63px] mb-[6px]">
                            <div class="flex items-center gap-[12px] w-[119px] pl-[16px] rounded-[16px] border-2 border-[#8a8550]">
                                <div class="flex items-center justify-center w-[48px] h-[48px] rounded-full bg-[#52a8cc] text-white">
                                    <svg class="w-[34px] h-[34px]"><use href="#i-insight"/></svg>
                                </div>
                                <svg class="w-[21px] h-[16px] text-[#7a7648]"><use href="#i-caret"/></svg>
                            </div>
                            <div class="flex items-center w-[373px] pl-[17px] rounded-[16px] border-2 border-[#8a8550]">
                                <span class="w-[289px] overflow-hidden whitespace-nowrap">standard:calculated_insights</span>
                                <svg class="w-[26px] h-[26px] ml-[22px]" viewBox="0 0 26 26"><circle cx="13" cy="13" r="13" fill="#7a7648"/><path stroke="#fdf6c6" stroke-width="3" d="M8 8l10 10M18 8L8 18"/></svg>
                            </div>
                        </div>
                        <div class="flex items-end h-[67px] pb-[10px]">
                            <span class="font-semibold">Initials</span>
                            <svg class="w-[25px] h-[26px] ml-[12px] mb-[5px]"><use href="#i-info"/></svg>
                            <span class="flex items-center justify-center w-[32px] h-[32px] ml-auto rounded-full border-2 border-[#8a8550] text-[15px] text-[#3f72b0]">A<span class="text-[13px] mt-[6px]">a</span></span>
                        </div>
                        <div class="h-[63px] rounded-[16px] border-2 border-[#8a8550]"></div>
                    </div>
                </div>
            </section>
        </aside>
    </div>
</div>
</body>
</html>
